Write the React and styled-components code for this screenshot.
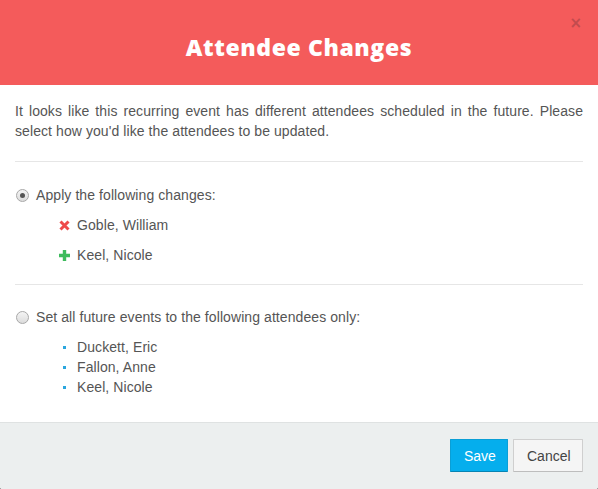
import React from "react";
import styled, { createGlobalStyle } from "styled-components";

const Global = createGlobalStyle`
  html, body { margin: 0; padding: 0; background: #3a3a3a; }
  body { font-family: "Liberation Sans", Arial, sans-serif; }
  * { box-sizing: border-box; }
`;

const Modal = styled.div`
  width: 598px;
  height: 489px;
  background: #fff;
  display: flex;
  flex-direction: column;
  border-radius: 0 0 2px 2px;
  overflow: hidden;
`;

const Header = styled.div`
  position: relative;
  height: 85px;
  flex: none;
  background: #f45b5b;
  display: flex;
  align-items: center;
  justify-content: center;
`;

const Title = styled.h1`
  margin: 0;
  padding-top: 9px;
  font-family: "Open Sans", "Noto Sans", sans-serif;
  font-weight: 800;
  font-size: 23px;
  letter-spacing: 0.6px;
  color: #fff;
`;

const Close = styled.span`
  position: absolute;
  top: 14px;
  right: 16px;
  font-family: "DejaVu Sans", sans-serif;
  font-size: 15px;
  font-weight: bold;
  color: #b5484b;
  opacity: 0.8;
`;

const Body = styled.div`
  flex: 1;
  padding: 0 15px;
  color: #555;
  font-size: 14px;
  letter-spacing: 0.08px;
`;

const Intro = styled.p`
  margin: 0;
  padding: 16px 0 20px;
  line-height: 20px;
  text-align: justify;
  border-bottom: 1px solid #e6e6e6;
`;

const Section = styled.div`
  padding: ${(p) => p.$pad || "22px 0 20px"};
  border-bottom: ${(p) => (p.$last ? "none" : "1px solid #e6e6e6")};
`;

const RadioRow = styled.label`
  display: flex;
  align-items: center;
  gap: 7px;
  line-height: 20px;
`;

const Radio = styled.span`
  width: 13px;
  height: 13px;
  margin-left: 1px;
  border-radius: 50%;
  border: 1px solid #a8a8a8;
  background: linear-gradient(#f4f4f4, #dcdcdc);
  display: flex;
  align-items: center;
  justify-content: center;
  &::after {
    content: "";
    display: ${(p) => (p.$checked ? "block" : "none")};
    width: 5px;
    height: 5px;
    border-radius: 50%;
    background: #555;
  }
`;

const ChangeList = styled.ul`
  list-style: none;
  margin: 0;
  padding: 0 0 0 44px;
  display: flex;
  flex-direction: column;
  gap: 10px;
  margin-top: 10px;
`;

const ChangeItem = styled.li`
  display: flex;
  align-items: center;
  gap: 7px;
  line-height: 20px;
`;

const IconBox = styled.span`
  width: 11px;
  display: flex;
  justify-content: center;
`;

const AttList = styled.ul`
  list-style: none;
  margin: 10px 0 0;
  padding: 0 0 0 44px;
`;

const AttItem = styled.li`
  display: flex;
  align-items: center;
  gap: 8px;
  line-height: 20px;
  &::before {
    content: "";
    width: 3px;
    height: 3px;
    margin-left: 4px;
    margin-right: 3px;
    background: #2ba6de;
  }
`;

const Footer = styled.div`
  flex: none;
  height: 67px;
  background: #ecefef;
  border-top: 1px solid #dfe2e2;
  display: flex;
  justify-content: flex-end;
  align-items: center;
  gap: 5px;
  padding: 0 15px 1px;
`;

const Button = styled.button`
  height: 33px;
  padding: 0 13px;
  font-family: "Liberation Sans", Arial, sans-serif;
  font-size: 14px;
  border-radius: 1px;
  cursor: pointer;
  background: ${(p) => (p.$primary ? "#05aeed" : "#f5f5f5")};
  color: ${(p) => (p.$primary ? "#fff" : "#444")};
  border: 1px solid ${(p) => (p.$primary ? "#0a9fd6" : "#cfcfcf")};
  border-bottom-color: ${(p) => (p.$primary ? "#0784b3" : "#bdbdbd")};
  width: ${(p) => p.$w};
`;

const XIcon = () => (
  <svg width="11" height="11" viewBox="0 0 11 11">
    <path d="M1.5 1.5 L9.5 9.5 M9.5 1.5 L1.5 9.5" stroke="#ee4a4a" strokeWidth="3" strokeLinecap="butt" />
  </svg>
);

const PlusIcon = () => (
  <svg width="11" height="11" viewBox="0 0 11 11">
    <path d="M5.5 0 V11 M0 5.5 H11" stroke="#3dbb5c" strokeWidth="3.4" />
  </svg>
);

export default function App() {
  return (
    <>
      <Global />
      <Modal>
        <Header>
          <Title>Attendee Changes</Title>
          <Close>×</Close>
        </Header>
        <Body>
          <Intro>
            It looks like this recurring event has different attendees scheduled in the future. Please
            select how you'd like the attendees to be updated.
          </Intro>
          <Section $pad="23px 0 19px">
            <RadioRow>
              <Radio $checked />
              Apply the following changes:
            </RadioRow>
            <ChangeList>
              <ChangeItem>
                <IconBox><XIcon /></IconBox>
                Goble, William
              </ChangeItem>
              <ChangeItem>
                <IconBox><PlusIcon /></IconBox>
                Keel, Nicole
              </ChangeItem>
            </ChangeList>
          </Section>
          <Section $pad="22px 0 0" $last>
            <RadioRow>
              <Radio />
              Set all future events to the following attendees only:
            </RadioRow>
            <AttList>
              <AttItem>Duckett, Eric</AttItem>
              <AttItem>Fallon, Anne</AttItem>
              <AttItem>Keel, Nicole</AttItem>
            </AttList>
          </Section>
        </Body>
        <Footer>
          <Button $primary $w="58px">Save</Button>
          <Button $w="70px">Cancel</Button>
        </Footer>
      </Modal>
    </>
  );
}
